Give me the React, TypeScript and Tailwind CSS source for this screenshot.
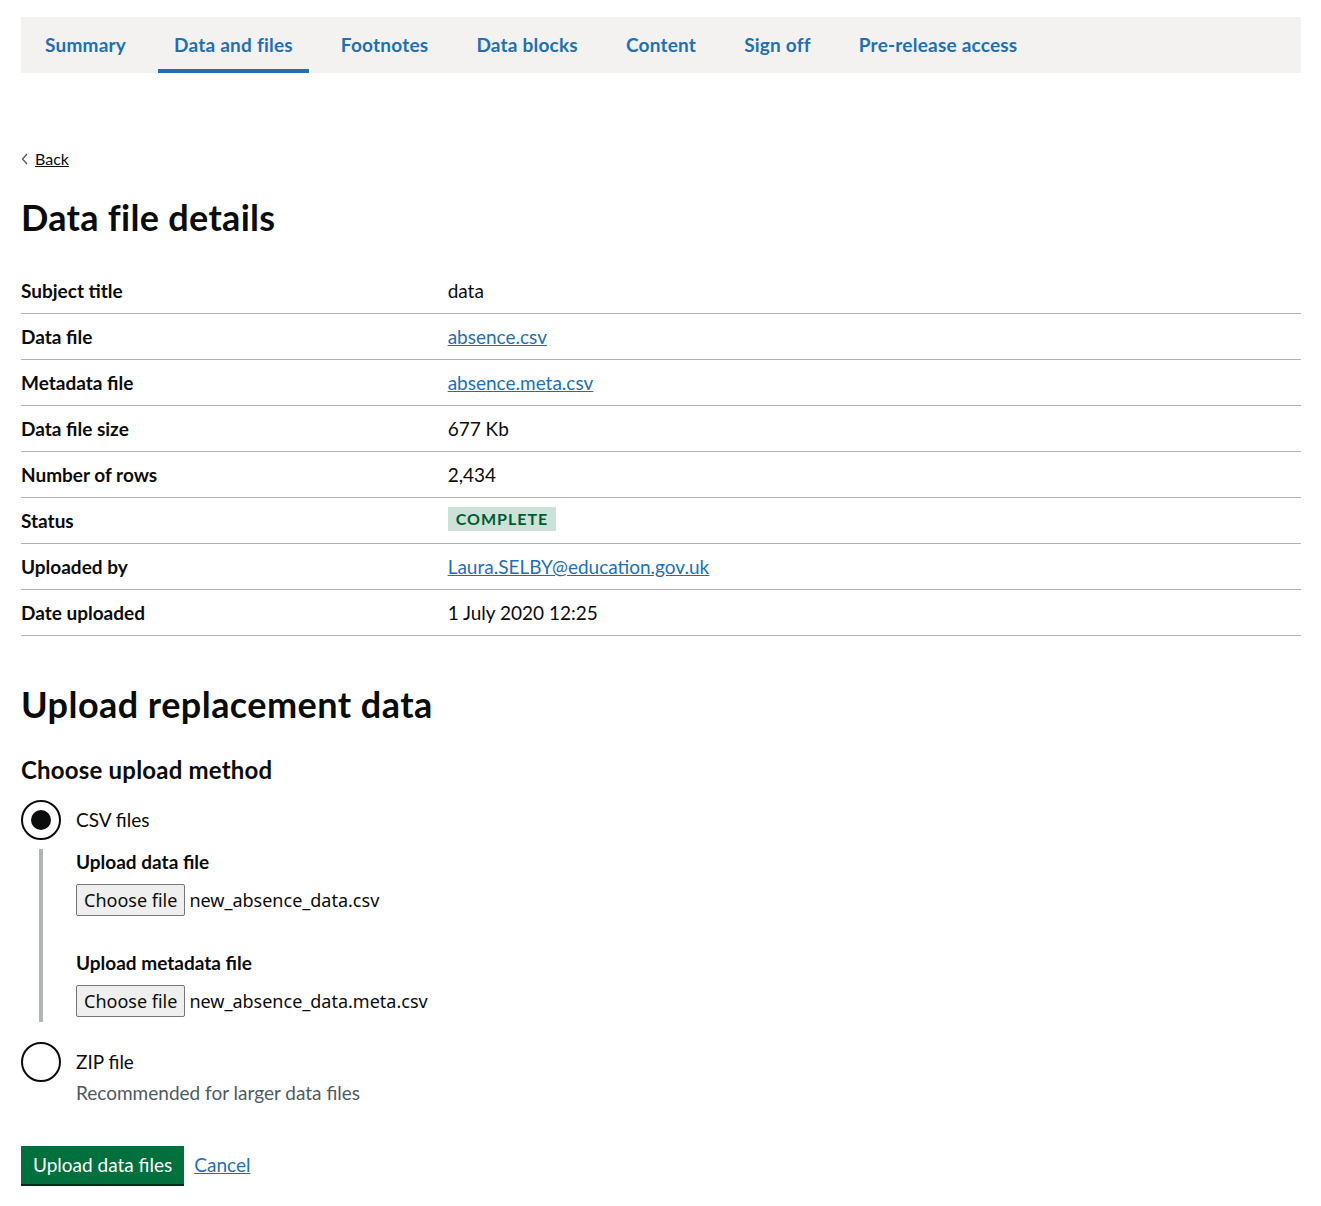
import React from "react";

const font = { fontFamily: "Lato, 'Noto Sans', sans-serif" };

const tabs = ["Summary", "Data and files", "Footnotes", "Data blocks", "Content", "Sign off", "Pre-release access"];

function Row({ label, children }: { label: string; children: React.ReactNode }) {
  return (
    <div className="flex border-b border-[#b1b4b6] py-[10px] text-[19px] leading-[25px] h-[46px]">
      <div className="w-1/3 font-bold">{label}</div>
      <div className="flex-1">{children}</div>
    </div>
  );
}

function Radio({ checked }: { checked?: boolean }) {
  return (
    <div className="w-10 h-10 rounded-full border-2 border-[#0b0c0c] flex items-center justify-center shrink-0">
      {checked && <div className="w-5 h-5 rounded-full bg-[#0b0c0c]"></div>}
    </div>
  );
}

function FileInput({ name }: { name: string }) {
  return (
    <div className="flex items-center mt-[10px] text-[18px]" style={{ fontFamily: "'Noto Sans', sans-serif" }}>
      <span className="h-[32px] px-[7px] flex items-center bg-[#efefef] border border-[#767676] rounded-[2px]">Choose file</span>
      <span className="ml-[4px]">{name}</span>
    </div>
  );
}

export default function App() {
  return (
    <div style={font} className="text-[#0b0c0c] bg-white min-h-[1206px] pt-[17px]">
      <div className="ml-[21px] w-[1280px]">
        <nav className="h-[56px] bg-[#f3f2f1] flex pl-2 gap-4">
          {tabs.map((t, i) => (
            <a
              key={t}
              className={
                "h-full px-4 flex items-center text-[19px] font-bold tracking-[0.22px] text-[#1d70b8] " +
                (i === 1 ? "border-b-4 border-[#1d70b8] pt-1" : "")
              }
            >
              {t}
            </a>
          ))}
        </nav>

        <a className="mt-[76px] flex items-center text-[16px] leading-[20px] underline">
          <svg width="8" height="12" viewBox="0 0 8 12" className="mr-[6px]">
            <path d="M6 1 L1.5 6 L6 11" fill="none" stroke="#505a5f" strokeWidth="1.3" />
          </svg>
          Back
        </a>

        <h1 className="mt-[28px] text-[36px] leading-[40px] font-bold tracking-[0.3px]">Data file details</h1>

        <div className="mt-[31px]">
          <Row label="Subject title">data</Row>
          <Row label="Data file">
            <a className="text-[#1d70b8] underline">absence.csv</a>
          </Row>
          <Row label="Metadata file">
            <a className="text-[#1d70b8] underline">absence.meta.csv</a>
          </Row>
          <Row label="Data file size">677 Kb</Row>
          <Row label="Number of rows">2,434</Row>
          <Row label="Status">
            <span className="inline-block align-top -mt-[1px] bg-[#cce2d8] text-[#005a30] font-bold text-[16px] leading-[24px] tracking-[1px] px-2 h-6">
              COMPLETE
            </span>
          </Row>
          <Row label="Uploaded by">
            <a className="text-[#1d70b8] underline">Laura.SELBY@education.gov.uk</a>
          </Row>
          <Row label="Date uploaded">1 July 2020 12:25</Row>
        </div>

        <h2 className="mt-[48px] text-[36px] leading-[40px] font-bold tracking-[0.45px]">Upload replacement data</h2>

        <h3 className="mt-[31px] text-[24px] leading-[30px] font-bold tracking-[0.2px]">Choose upload method</h3>

        <div className="mt-[15px] flex items-center gap-[15px]">
          <Radio checked />
          <span className="text-[19px]">CSV files</span>
        </div>

        <div className="mt-[10px] ml-[18px] border-l-4 border-[#b1b4b6] pl-[33px] pb-[5px]">
          <div className="-mt-[1px] text-[19px] leading-[25px] font-bold">Upload data file</div>
          <FileInput name="new_absence_data.csv" />
          <div className="mt-[34px] text-[19px] leading-[25px] font-bold">Upload metadata file</div>
          <FileInput name="new_absence_data.meta.csv" />
        </div>

        <div className="mt-[20px] flex items-center gap-[15px]">
          <Radio />
          <span className="text-[19px]">ZIP file</span>
        </div>
        <div className="ml-[55px] text-[19px] leading-[25px] text-[#505a5f] -mt-[2px]">Recommended for larger data files</div>

        <div className="mt-[41px] flex items-center gap-[10px]">
          <button className="bg-[#00703c] text-white text-[19px] h-[38px] px-3 shadow-[0_2px_0_#002d18]">
            Upload data files
          </button>
          <a className="text-[19px] text-[#1d70b8] underline">Cancel</a>
        </div>
      </div>
    </div>
  );
}
